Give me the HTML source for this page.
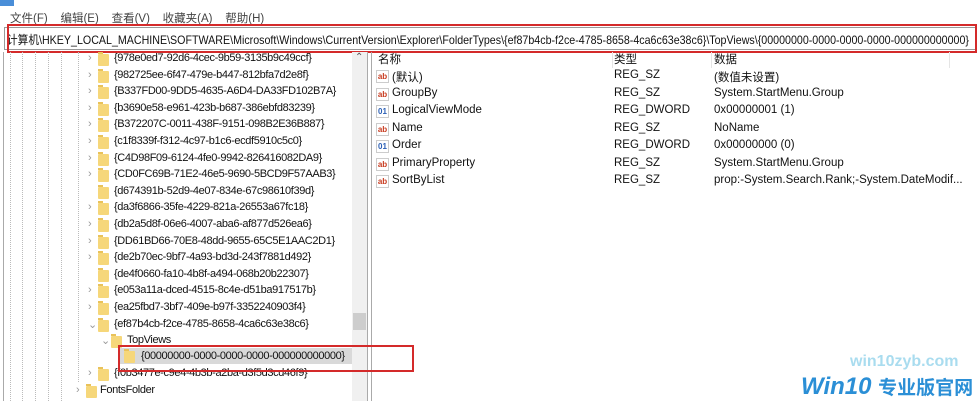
<!DOCTYPE html><html><head><meta charset="utf-8"><style>
body{margin:0;width:978px;height:401px;overflow:hidden;background:#fff;font-family:"Liberation Sans","Noto Sans CJK SC",sans-serif;font-size:11.5px;color:#111;position:relative}
.a{position:absolute;white-space:nowrap}
.tr{font-size:11px;letter-spacing:-0.37px}
.f{position:absolute;width:11px;height:12px;background:#f6d77a;border-radius:1px}
.f:before{content:"";position:absolute;left:0;top:-2px;width:5px;height:2px;background:#e9c25a}
.ch{position:absolute;color:#999;font-size:11px}
.ic{position:absolute;width:11px;height:11px;border:1px solid #ccc;font-size:8px;font-weight:bold;line-height:11px;text-align:center}
</style></head><body>
<div class="a" style="left:0;top:0;width:14px;height:6px;background:#4a8ed8"></div>
<div class="a" style="left:10px;top:10px;color:#444">文件(F)&nbsp;&nbsp;&nbsp;&nbsp;编辑(E)&nbsp;&nbsp;&nbsp;&nbsp;查看(V)&nbsp;&nbsp;&nbsp;&nbsp;收藏夹(A)&nbsp;&nbsp;&nbsp;&nbsp;帮助(H)</div>
<div class="a" style="left:4px;top:27px;width:970px;height:21px;border:1px solid #999;background:#fff"></div>
<div id="addr" class="a" style="left:7px;top:31px;font-size:12px;transform-origin:0 0">计算机\HKEY_LOCAL_MACHINE\SOFTWARE\Microsoft\Windows\CurrentVersion\Explorer\FolderTypes\{ef87b4cb-f2ce-4785-8658-4ca6c63e38c6}\TopViews\{00000000-0000-0000-0000-000000000000}</div>
<div class="a" style="left:7px;top:24px;width:966px;height:25px;border:2px solid #d42a2a"></div>
<div class="a" style="left:3px;top:52px;width:1px;height:349px;background:#aaa"></div>
<div class="a" style="left:10px;top:52px;height:349px;border-left:1px dotted #bbb"></div>
<div class="a" style="left:22px;top:52px;height:349px;border-left:1px dotted #bbb"></div>
<div class="a" style="left:35px;top:52px;height:349px;border-left:1px dotted #bbb"></div>
<div class="a" style="left:48px;top:52px;height:349px;border-left:1px dotted #bbb"></div>
<div class="a" style="left:61px;top:52px;height:349px;border-left:1px dotted #bbb"></div>
<div class="a" style="left:78px;top:52px;height:330px;border-left:1px dotted #bbb"></div>
<div class="a" style="left:352px;top:52px;width:15px;height:349px;background:#f0f0f0"></div>
<div class="a" style="left:355px;top:52px;color:#555;font-size:10px">⌃</div>
<div class="a" style="left:353px;top:313px;width:13px;height:17px;background:#cdcdcd"></div>
<div class="a" style="left:367px;top:52px;width:1px;height:349px;background:#aaa"></div>
<div class="a" style="left:371px;top:52px;width:1px;height:349px;background:#aaa"></div>
<div id="t"></div>
<div class="a" style="left:120px;top:348px;width:232px;height:16px;background:#d9d9d9"></div>
<script>
var s=document.getElementById("addr");s.style.transform="scaleX("+(962/s.offsetWidth)+")";
var r=["{978e0ed7-92d6-4cec-9b59-3135b9c49ccf}","{982725ee-6f47-479e-b447-812bfa7d2e8f}","{B337FD00-9DD5-4635-A6D4-DA33FD102B7A}","{b3690e58-e961-423b-b687-386ebfd83239}","{B372207C-0011-438F-9151-098B2E36B887}","{c1f8339f-f312-4c97-b1c6-ecdf5910c5c0}","{C4D98F09-6124-4fe0-9942-826416082DA9}","{CD0FC69B-71E2-46e5-9690-5BCD9F57AAB3}","{d674391b-52d9-4e07-834e-67c98610f39d}","{da3f6866-35fe-4229-821a-26553a67fc18}","{db2a5d8f-06e6-4007-aba6-af877d526ea6}","{DD61BD66-70E8-48dd-9655-65C5E1AAC2D1}","{de2b70ec-9bf7-4a93-bd3d-243f7881d492}","{de4f0660-fa10-4b8f-a494-068b20b22307}","{e053a11a-dced-4515-8c4e-d51ba917517b}","{ea25fbd7-3bf7-409e-b97f-3352240903f4}","{ef87b4cb-f2ce-4785-8658-4ca6c63e38c6}"];
var h="";
function row(i,cx,fx,tx,t,ch){var y=51+i*16.6;if(ch)h+='<div class="ch" style="left:'+cx+'px;top:'+(y+1)+'px">'+ch+'</div>';h+='<div class="f" style="left:'+fx+'px;top:'+(y+3)+'px"></div><div class="a tr" style="left:'+tx+'px;top:'+(y+1)+'px">'+t+'</div>';}
r.forEach(function(t,i){row(i,88,98,114,t,(i==8||i==13)?"":(i==16?"⌄":"›"))});
row(17,101,111,127,"TopViews","⌄");
row(19,88,98,114,"{f0b3477e-c9e4-4b3b-a2ba-d3f5d3cd46f9}","›");
row(20,76,86,100,"FontsFolder","›");
document.getElementById("t").innerHTML=h;
</script>
<div class="f" style="left:124px;top:351px;z-index:2"></div>
<div class="a tr" style="left:141px;top:350px;z-index:2">{00000000-0000-0000-0000-000000000000}</div>
<div class="a" style="left:118px;top:345px;width:292px;height:23px;border:2px solid #d42a2a;z-index:3"></div>
<div class="a" style="left:378px;top:51px">名称</div>
<div class="a" style="left:612px;top:52px;width:1px;height:16px;background:#e5e5e5"></div>
<div class="a" style="left:614px;top:51px">类型</div>
<div class="a" style="left:711px;top:52px;width:1px;height:16px;background:#e5e5e5"></div>
<div class="a" style="left:714px;top:51px">数据</div>
<div class="a" style="left:949px;top:52px;width:1px;height:16px;background:#e5e5e5"></div>
<div id="v"></div>
<script>
var d=[["(默认)","REG_SZ","(数值未设置)",0],["GroupBy","REG_SZ","System.StartMenu.Group",0],["LogicalViewMode","REG_DWORD","0x00000001 (1)",1],["Name","REG_SZ","NoName",0],["Order","REG_DWORD","0x00000000 (0)",1],["PrimaryProperty","REG_SZ","System.StartMenu.Group",0],["SortByList","REG_SZ","prop:-System.Search.Rank;-System.DateModif...",0]];
var g="";d.forEach(function(e,i){var y=69+i*17.5;g+='<div class="ic" style="left:376px;top:'+(y+1)+'px;color:'+(e[3]?'#2b5fb5':'#c83a1e')+'">'+(e[3]?'01':'ab')+'</div><div class="a" style="left:392px;top:'+y+'px">'+e[0]+'</div><div class="a" style="left:614px;top:'+y+'px">'+e[1]+'</div><div class="a" style="left:714px;top:'+y+'px">'+e[2]+'</div>'});
document.getElementById("v").innerHTML=g;
</script>
<div class="a" style="left:850px;top:353px;font-size:16px;font-weight:bold;color:#a9dcef">win10zyb.com</div>
<div class="a" style="left:801px;top:373px;font-size:24px;font-weight:bold;font-style:italic;color:#2b8fd6;line-height:28px">Win10 <span style="font-style:normal;font-size:19px">专业版官网</span></div>
</body></html>
